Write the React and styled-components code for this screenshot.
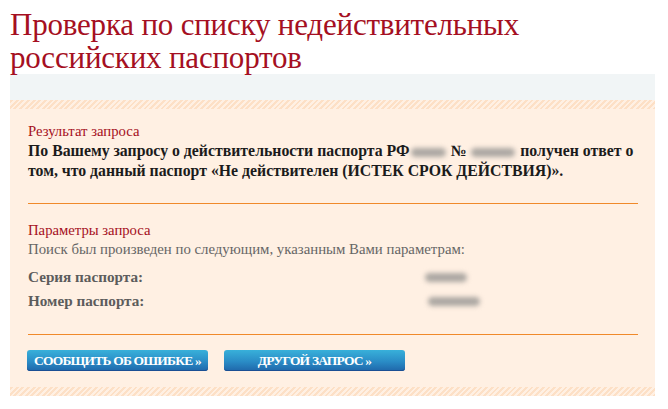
import React from "react";
import styled, { createGlobalStyle } from "styled-components";

const serif = `"Liberation Serif", "Times New Roman", serif`;

const GlobalStyle = createGlobalStyle`
  html, body {
    margin: 0;
    padding: 0;
    background: #ffffff;
    font-family: ${serif};
  }
`;

const Page = styled.div`
  width: 645px;
  padding: 8px 0 0 10px;
  font-family: ${serif};
`;

const Title = styled.h1`
  margin: 0;
  font-family: ${serif};
  font-weight: normal;
  font-size: 31px;
  line-height: 33px;
  color: #a50f22;
  letter-spacing: -0.2px;
`;

const GreyBand = styled.div`
  height: 26px;
  background: #f1f5f6;
`;

const Stripes = styled.div`
  height: ${(p) => p.h}px;
  background-color: #fff0e3;
  background-image: repeating-linear-gradient(
    -45deg,
    #fde0c6 0px,
    #fde0c6 2px,
    #fff0e3 2px,
    #fff0e3 4px
  );
`;

const Panel = styled.div`
  background: #fff0e3;
  padding: 13px 17px 16px 18px;
`;

const Section = styled.div`
  padding-top: ${(p) => p.pt || 0}px;
  padding-bottom: ${(p) => p.pb || 0}px;
`;

const Heading = styled.div`
  font-family: ${serif};
  color: #a50f22;
  font-size: 14.7px;
  line-height: 18px;
`;

const Lead = styled.p`
  margin: 1px 0 0;
  font-family: ${serif};
  font-weight: bold;
  font-size: 15.8px;
  line-height: 20px;
  color: #1b1b1b;
`;

const Line = styled.span`
  display: block;
  white-space: nowrap;
`;

const Muted = styled.p`
  margin: 1px 0 0;
  font-family: ${serif};
  font-size: 14.8px;
  line-height: 18px;
  color: #666666;
`;

/* blurred-out personal data */
const Hidden = styled.span`
  display: inline-block;
  width: ${(p) => p.w}px;
  height: 9px;
  margin: 0 ${(p) => p.m ?? 1}px 0 ${(p) => p.ml ?? p.m ?? 1}px;
  border-radius: 5px;
  background: #aca7a2;
  filter: blur(2.5px);
  vertical-align: middle;
`;

const Divider = styled.hr`
  border: 0;
  height: 1px;
  background: #f0892a;
  margin: 0;
`;

const Params = styled.div`
  display: grid;
  grid-template-columns: 397px 1fr;
  row-gap: 6px;
  margin-top: 10px;
`;

const Label = styled.div`
  font-family: ${serif};
  font-weight: bold;
  font-size: 15.2px;
  line-height: 18px;
  color: #5c5c5c;
`;

const Value = styled.div`
  display: flex;
  align-items: center;
`;

const Buttons = styled.div`
  display: flex;
  gap: 16px;
  margin: 15px 0 0 -1px;
`;

const Button = styled.button`
  width: ${(p) => p.w}px;
  height: 21px;
  border: 0;
  border-radius: 3px;
  padding: 0;
  background: linear-gradient(#38b0da, #2a8cc6 55%, #1f67aa);
  box-shadow: inset 0 -1px 0 #1a4f93;
  color: #ffffff;
  font-family: ${serif};
  font-weight: bold;
  font-size: 13.5px;
  letter-spacing: -0.8px;
  cursor: pointer;
`;

export default function App() {
  return (
    <>
      <GlobalStyle />
      <Page>
        <Title>
          Проверка по списку недействительных
          <br />
          российских паспортов
        </Title>
        <GreyBand />
        <Stripes h={9} />
        <Panel>
          <Section pb={22}>
            <Heading>Результат запроса</Heading>
            <Lead>
              <Line>
                По Вашему запросу о действительности паспорта РФ
                <Hidden w={35} /> № <Hidden w={44} /> получен ответ о
              </Line>
              <Line>
                том, что данный паспорт «Не действителен (ИСТЕК СРОК ДЕЙСТВИЯ)».
              </Line>
            </Lead>
          </Section>
          <Divider />
          <Section pt={17} pb={24}>
            <Heading>Параметры запроса</Heading>
            <Muted>Поиск был произведен по следующим, указанным Вами параметрам:</Muted>
            <Params>
              <Label>Серия паспорта:</Label>
              <Value>
                <Hidden w={42} m={0} />
              </Value>
              <Label>Номер паспорта:</Label>
              <Value>
                <Hidden w={52} m={0} ml={3} />
              </Value>
            </Params>
          </Section>
          <Divider />
          <Buttons>
            <Button w={181}>СООБЩИТЬ ОБ ОШИБКЕ »</Button>
            <Button w={181}>ДРУГОЙ ЗАПРОС »</Button>
          </Buttons>
        </Panel>
        <Stripes h={9} />
      </Page>
    </>
  );
}
